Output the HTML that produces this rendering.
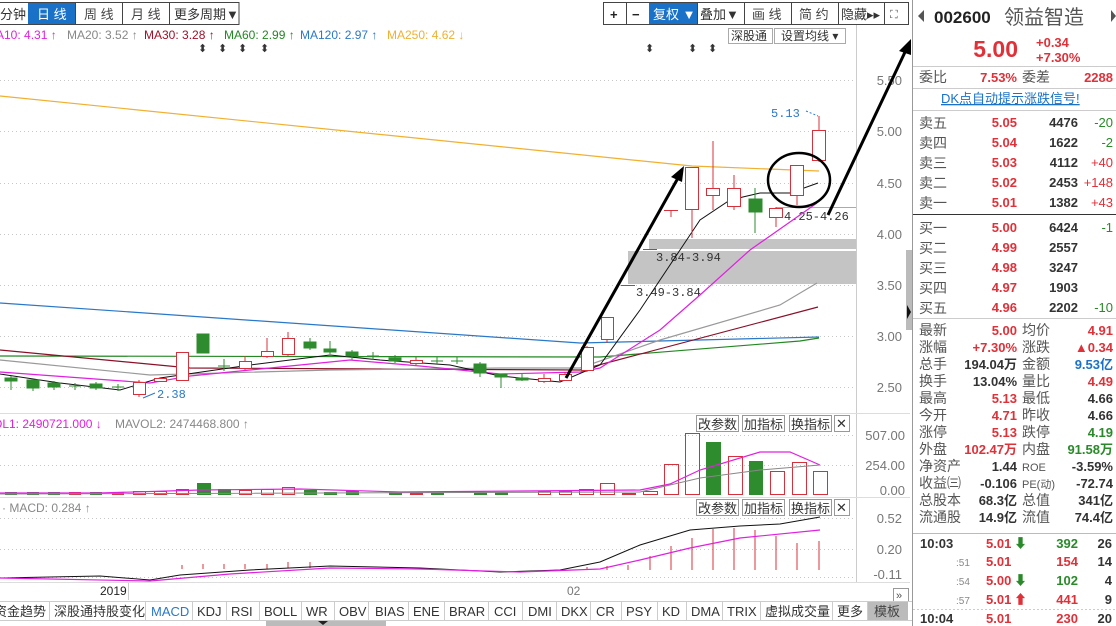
<!DOCTYPE html>
<html><head><meta charset="utf-8">
<style>
body{margin:0;background:#fff;width:1116px;height:626px;overflow:hidden;font-family:"Liberation Sans","Noto Sans CJK SC",sans-serif;}
svg{position:absolute;left:0;top:0}
</style></head><body>
<svg width="1116" height="626" viewBox="0 0 1116 626" font-family="Liberation Sans, Noto Sans CJK SC, sans-serif">
<!-- top toolbar left -->
<g font-size="13" stroke-width="1">
<rect x="-1" y="2.5" width="240" height="22" fill="#fff" stroke="#444"/>
<rect x="28" y="3" width="47" height="21" fill="#1a72c8"/>
<line x1="75.5" y1="3" x2="75.5" y2="24" stroke="#444"/>
<line x1="122.5" y1="3" x2="122.5" y2="24" stroke="#444"/>
<line x1="169.5" y1="3" x2="169.5" y2="24" stroke="#444"/>
<text x="0" y="19" fill="#333">分钟</text>
<text x="37" y="19" fill="#fff">日 线</text>
<text x="84" y="19" fill="#444">周 线</text>
<text x="131" y="19" fill="#444">月 线</text>
<text x="174" y="19" fill="#333">更多周期▼</text>
</g>
<!-- top toolbar right -->
<g font-size="13">
<rect x="603.5" y="2.5" width="305" height="22" fill="#fff" stroke="#444"/>
<rect x="649" y="3" width="48" height="21" fill="#1a72c8"/>
<line x1="626.5" y1="3" x2="626.5" y2="24" stroke="#444"/>
<line x1="697.5" y1="3" x2="697.5" y2="24" stroke="#444"/>
<line x1="744.5" y1="3" x2="744.5" y2="24" stroke="#444"/>
<line x1="791.5" y1="3" x2="791.5" y2="24" stroke="#444"/>
<line x1="838.5" y1="3" x2="838.5" y2="24" stroke="#444"/>
<line x1="884.5" y1="3" x2="884.5" y2="24" stroke="#444"/>
<text x="610" y="19" fill="#222" font-weight="bold">+</text>
<text x="632" y="19" fill="#222" font-weight="bold">−</text>
<text x="653" y="19" fill="#fff">复权 ▼</text>
<text x="700" y="19" fill="#333">叠加▼</text>
<text x="752" y="19" fill="#444">画 线</text>
<text x="799" y="19" fill="#444">简 约</text>
<text x="841" y="19" fill="#333">隐藏▸▸</text>
<text x="890" y="18" fill="#555" font-size="11">⛶</text>
</g>
<!-- MA legend -->
<g font-size="12">
<text x="-4" y="39" fill="#e020e0">A10: 4.31 ↑</text>
<text x="67" y="39" fill="#888">MA20: 3.52 ↑</text>
<text x="144" y="39" fill="#a01028">MA30: 3.28 ↑</text>
<text x="224" y="39" fill="#228822">MA60: 2.99 ↑</text>
<text x="300" y="39" fill="#2a78c8">MA120: 2.97 ↑</text>
<text x="387" y="39" fill="#f0b030">MA250: 4.62 ↓</text>
</g>
<g font-size="11" fill="#333">
<text x="198" y="52">⬍</text><text x="218" y="52">⬍</text><text x="238" y="52">⬍</text><text x="260" y="52">⬍</text>
<text x="645" y="52">⬍</text><text x="688" y="52">⬍</text><text x="708" y="52">⬍</text>
</g>
<g font-size="12">
<rect x="728.5" y="28.5" width="44" height="15" fill="#fff" stroke="#aaa"/>
<text x="731" y="40" fill="#333">深股通</text>
<rect x="774.5" y="28.5" width="71" height="15" fill="#fff" stroke="#aaa"/>
<text x="781" y="40" fill="#333">设置均线 ▾</text>
</g>
<!-- grid -->
<g stroke="#c8c8c8" stroke-dasharray="1,3">
<line x1="0" y1="80.5" x2="856" y2="80.5"/><line x1="0" y1="131.5" x2="856" y2="131.5"/>
<line x1="0" y1="183.5" x2="856" y2="183.5"/><line x1="0" y1="234.5" x2="856" y2="234.5"/>
<line x1="0" y1="285.5" x2="856" y2="285.5"/><line x1="0" y1="336.5" x2="856" y2="336.5"/>
<line x1="0" y1="387.5" x2="856" y2="387.5"/>
<line x1="0" y1="435.5" x2="856" y2="435.5"/><line x1="0" y1="465.5" x2="856" y2="465.5"/>
<line x1="0" y1="518.5" x2="856" y2="518.5"/><line x1="0" y1="549.5" x2="856" y2="549.5"/><line x1="0" y1="577.5" x2="856" y2="577.5"/>
</g>
<line x1="856.5" y1="25" x2="856.5" y2="582" stroke="#ccc"/>
<line x1="0" y1="413.5" x2="910" y2="413.5" stroke="#ddd"/>
<line x1="0" y1="497.5" x2="910" y2="497.5" stroke="#ddd"/>
<line x1="0" y1="582.5" x2="910" y2="582.5" stroke="#ddd"/>
<g font-size="13" fill="#777" text-anchor="end">
<text x="902" y="85">5.50</text><text x="902" y="136">5.00</text><text x="902" y="188">4.50</text>
<text x="902" y="239">4.00</text><text x="902" y="290">3.50</text><text x="902" y="341">3.00</text><text x="902" y="392">2.50</text>
<text x="905" y="440">507.00</text><text x="905" y="470">254.00</text><text x="905" y="495">0.00</text>
<text x="902" y="523">0.52</text><text x="902" y="554">0.20</text><text x="902" y="579">-0.11</text>
</g>
<rect x="906" y="250" width="6" height="80" fill="#bbb"/>
<path d="M907 305 L911 312 L907 319Z" fill="#111"/>
<!-- gray zones -->
<rect x="649" y="239" width="207" height="10" fill="#c4c4c4"/>
<rect x="628" y="251" width="228" height="33" fill="#c4c4c4"/>
<line x1="776" y1="207.5" x2="856" y2="207.5" stroke="#aaa"/>
<g font-family="Liberation Mono, monospace" font-size="12" fill="#333">
<text x="656" y="261">3.84-3.94</text>
<text x="636" y="296">3.49-3.84</text>
<text x="784" y="220">4.25-4.26</text>
</g>
<text x="771" y="117" font-family="Liberation Mono, monospace" font-size="12" fill="#2a78c8">5.13</text>
<path d="M806 111 L818 116" stroke="#2a78c8" stroke-dasharray="2,2"/>
<text x="157" y="398" font-family="Liberation Mono, monospace" font-size="12" fill="#2a78c8">2.38</text>
<path d="M155 393 L143 398" stroke="#2a78c8"/>
<!-- MAs -->
<g fill="none" stroke-width="1.2">
<polyline stroke="#f0b030" points="0,96 692,166 819,171"/>
<polyline stroke="#2a78c8" points="0,303 580,343 819,337"/>
<polyline stroke="#228822" points="0,356 600,357 800,341 819,338"/>
<polyline stroke="#8a1028" points="0,350 190,368 580,370 818,307"/>
<polyline stroke="#999" points="0,360 150,375 330,370 500,368 580,368 660,340 780,305 817,283"/>
<polyline stroke="#e020e0" points="0,372 150,383 190,376 350,360 420,366 500,374 580,372 600,368 660,330 700,295 750,250 817,203"/>
<polyline stroke="#111" stroke-width="1" points="0,374 60,383 120,390 160,378 250,365 330,355 380,360 450,365 500,376 560,382 600,365 640,310 680,250 700,220 730,200 760,193 790,193 818,183"/>
</g>
<!-- candles -->
<g stroke-width="1">
<g stroke="#2e8b2e" fill="#2e8b2e">
<line x1="11" y1="376" x2="11" y2="390"/><rect x="5" y="378" width="12" height="3"/>
<line x1="33" y1="379" x2="33" y2="391"/><rect x="27" y="380" width="12" height="8"/>
<line x1="54" y1="381" x2="54" y2="390"/><rect x="48" y="383" width="12" height="4"/>
<line x1="75" y1="383" x2="75" y2="390"/><line x1="69" y1="386" x2="81" y2="386"/>
<line x1="96" y1="382" x2="96" y2="390"/><rect x="90" y="384" width="12" height="4"/>
<line x1="118" y1="384" x2="118" y2="391"/><line x1="112" y1="387" x2="124" y2="387"/>
<rect x="197" y="334" width="12" height="19"/>
<line x1="224" y1="359" x2="224" y2="371"/><line x1="218" y1="366" x2="230" y2="366"/>
<line x1="310" y1="338" x2="310" y2="350"/><rect x="304" y="342" width="12" height="6"/>
<line x1="330" y1="341" x2="330" y2="354"/><rect x="324" y="349" width="12" height="3"/>
<line x1="352" y1="350" x2="352" y2="360"/><rect x="346" y="352" width="12" height="4"/>
<line x1="373" y1="352" x2="373" y2="360"/><line x1="367" y1="356" x2="379" y2="356"/>
<line x1="395" y1="355" x2="395" y2="363"/><rect x="389" y="358" width="12" height="3"/>
<line x1="437" y1="357" x2="437" y2="364"/><line x1="431" y1="361" x2="443" y2="361"/>
<line x1="457" y1="357" x2="457" y2="364"/><line x1="451" y1="361" x2="463" y2="361"/>
<line x1="480" y1="362" x2="480" y2="377"/><rect x="474" y="364" width="12" height="9"/>
<line x1="501" y1="374" x2="501" y2="388"/><rect x="495" y="374" width="12" height="3"/>
<line x1="522" y1="374" x2="522" y2="381"/><rect x="516" y="378" width="12" height="2"/>
<line x1="755" y1="188" x2="755" y2="233"/><rect x="749" y="199" width="13" height="13"/>
</g>
<g stroke="#d8303a" fill="#fff">
<line x1="139" y1="380" x2="139" y2="397"/><rect x="133.5" y="382.5" width="12" height="12"/>
<rect x="154.5" y="378.5" width="12" height="3"/>
<rect x="176.5" y="352.5" width="12" height="28"/>
<line x1="245" y1="356" x2="245" y2="370"/><rect x="239.5" y="361.5" width="12" height="7"/>
<line x1="267" y1="338" x2="267" y2="358"/><rect x="261.5" y="351.5" width="12" height="5"/>
<line x1="288" y1="332" x2="288" y2="356"/><rect x="282.5" y="338.5" width="12" height="16"/>
<line x1="416" y1="357" x2="416" y2="365"/><rect x="410.5" y="360.5" width="12" height="3"/>
<line x1="544" y1="374" x2="544" y2="383"/><rect x="538.5" y="378.5" width="12" height="3"/>
<line x1="565" y1="372" x2="565" y2="381"/><rect x="559.5" y="374.5" width="12" height="6"/>
<line x1="587" y1="346" x2="587" y2="372"/><rect x="581.5" y="347.5" width="12" height="23"/>
<line x1="607" y1="317" x2="607" y2="343"/><rect x="601.5" y="317.5" width="12" height="22"/>
<line x1="621" y1="285.5" x2="635" y2="285.5"/>
<line x1="643" y1="249.5" x2="657" y2="249.5"/>
<line x1="664" y1="210.5" x2="678" y2="210.5"/><line x1="671" y1="210" x2="671" y2="217"/>
<line x1="692" y1="209" x2="692" y2="238"/><rect x="685.5" y="167.5" width="13" height="42"/>
<line x1="713" y1="141" x2="713" y2="210"/><rect x="706.5" y="188.5" width="13" height="7"/>
<line x1="734" y1="175" x2="734" y2="210"/><rect x="727.5" y="188.5" width="13" height="18"/>
<line x1="776" y1="207" x2="776" y2="227"/><rect x="769.5" y="208.5" width="13" height="9"/>
<line x1="797" y1="195" x2="797" y2="205"/><rect x="790.5" y="165.5" width="13" height="30"/>
<line x1="819" y1="116" x2="819" y2="162"/><rect x="812.5" y="130.5" width="13" height="30"/>
</g>
</g>
<!-- drawn arrows & circle -->
<g stroke="#000" stroke-width="3" fill="none">
<line x1="566" y1="378" x2="678" y2="178"/>
<line x1="828" y1="215" x2="906" y2="50"/>
<ellipse cx="799" cy="180" rx="31" ry="27" stroke-width="2.5"/>
</g>
<path d="M684 166 L671 177 L682 182Z" fill="#000"/>
<path d="M911 39 L899 51 L911 55Z" fill="#000"/>
<!-- volume panel -->
<g font-size="12">
<text x="-7" y="428" fill="#e020e0">OL1: 2490721.000 ↓</text>
<text x="115" y="428" fill="#888">MAVOL2: 2474468.800 ↑</text>
</g>
<g font-size="13" fill="#333">
<rect x="696.5" y="415.5" width="42" height="16" fill="#fff" stroke="#999"/><text x="698" y="429">改参数</text>
<rect x="742.5" y="415.5" width="42" height="16" fill="#fff" stroke="#999"/><text x="744" y="429">加指标</text>
<rect x="789.5" y="415.5" width="42" height="16" fill="#fff" stroke="#999"/><text x="791" y="429">换指标</text>
<rect x="834.5" y="415.5" width="15" height="16" fill="#fff" stroke="#999"/><text x="836" y="428">✕</text>
<rect x="696.5" y="499.5" width="42" height="16" fill="#fff" stroke="#999"/><text x="698" y="513">改参数</text>
<rect x="742.5" y="499.5" width="42" height="16" fill="#fff" stroke="#999"/><text x="744" y="513">加指标</text>
<rect x="789.5" y="499.5" width="42" height="16" fill="#fff" stroke="#999"/><text x="791" y="513">换指标</text>
<rect x="834.5" y="499.5" width="15" height="16" fill="#fff" stroke="#999"/><text x="836" y="512">✕</text>
</g>
<g fill="#2e8b2e">
<rect x="5" y="492" width="12" height="3"/><rect x="27" y="492" width="12" height="3"/><rect x="48" y="492" width="12" height="3"/><rect x="90" y="492" width="12" height="3"/>
<rect x="197" y="483" width="14" height="12"/><rect x="218" y="489" width="13" height="6"/>
<rect x="304" y="490" width="13" height="5"/><rect x="324" y="492" width="13" height="3"/><rect x="346" y="491" width="13" height="4"/>
<rect x="389" y="492" width="13" height="3"/><rect x="431" y="492" width="13" height="3"/><rect x="474" y="492" width="13" height="3"/><rect x="495" y="492" width="13" height="3"/>
<rect x="706" y="442" width="15" height="53"/><rect x="749" y="461" width="14" height="34"/>
</g>
<g fill="#d8303a"><rect x="69" y="492" width="12" height="3"/><rect x="410" y="492" width="13" height="3"/><rect x="622" y="493" width="14" height="2"/><rect x="112" y="492" width="12" height="3"/></g>
<g fill="none" stroke="#d8303a">
<rect x="133.5" y="491.5" width="12" height="3"/><rect x="154.5" y="491.5" width="12" height="3"/><rect x="176.5" y="489.5" width="12" height="5"/>
<rect x="239.5" y="490.5" width="12" height="4"/><rect x="261.5" y="489.5" width="12" height="5"/><rect x="282.5" y="487.5" width="12" height="7"/>
<rect x="538.5" y="491.5" width="12" height="3"/><rect x="559.5" y="491.5" width="12" height="3"/>
<rect x="579.5" y="489.5" width="14" height="5"/><rect x="600.5" y="483.5" width="14" height="11"/><rect x="643.5" y="491.5" width="14" height="3"/>
<rect x="664.5" y="464.5" width="14" height="30"/><rect x="685.5" y="433.5" width="14" height="61"/>
<rect x="728.5" y="456.5" width="14" height="38"/><rect x="770.5" y="471.5" width="14" height="23"/>
<rect x="792.5" y="462.5" width="14" height="32"/><rect x="813.5" y="471.5" width="14" height="23"/>
</g>
<polyline fill="none" stroke="#e020e0" stroke-width="1.2" points="0,493 100,493 200,490 300,489 400,492 640,490 670,484 700,470 760,452 790,452 820,465"/>
<polyline fill="none" stroke="#888" points="0,494 640,492 700,478 760,470 820,465"/>
<!-- MACD -->
<text x="2" y="512" font-size="12" fill="#888">· MACD: 0.284 ↑</text>
<g stroke="#d8303a">
<line x1="628" y1="570" x2="628" y2="565"/><line x1="650" y1="570" x2="650" y2="556"/><line x1="671" y1="570" x2="671" y2="546"/>
<line x1="692" y1="570" x2="692" y2="538"/><line x1="713" y1="570" x2="713" y2="529"/><line x1="734" y1="570" x2="734" y2="528"/>
<line x1="755" y1="570" x2="755" y2="530"/><line x1="776" y1="570" x2="776" y2="536"/><line x1="797" y1="570" x2="797" y2="543"/>
<line x1="819" y1="570" x2="819" y2="541"/><line x1="607" y1="570" x2="607" y2="566"/><line x1="587" y1="570" x2="587" y2="567"/>
<line x1="182" y1="569" x2="182" y2="565"/><line x1="203" y1="569" x2="203" y2="564"/><line x1="224" y1="569" x2="224" y2="564"/><line x1="245" y1="569" x2="245" y2="564"/><line x1="267" y1="569" x2="267" y2="564"/><line x1="288" y1="568" x2="288" y2="562"/><line x1="310" y1="568" x2="310" y2="562"/>
</g>
<polyline fill="none" stroke="#111" points="0,578 100,576 150,580 180,575 250,570 330,566 420,568 500,572 560,570 600,562 640,545 690,530 740,526 780,524 820,517"/>
<polyline fill="none" stroke="#e020e0" stroke-width="1.2" points="0,578 150,581 230,574 330,568 420,569 520,572 600,569 640,560 690,548 740,538 820,530"/>
<!-- date axis -->
<text x="100" y="595" font-size="12" fill="#222">2019</text>
<line x1="128.5" y1="583" x2="128.5" y2="600" stroke="#ccc"/>
<text x="567" y="595" font-size="12" fill="#777">02</text>
<rect x="893.5" y="588.5" width="15" height="13" fill="#fff" stroke="#999"/>
<text x="896" y="599" font-size="11" fill="#555">»</text>
<!-- bottom tabs -->
<rect x="0" y="601" width="912" height="19" fill="#fff"/>
<line x1="0" y1="601.5" x2="912" y2="601.5" stroke="#ccc"/>
<line x1="0" y1="620.5" x2="912" y2="620.5" stroke="#ccc"/>
<rect x="868" y="602" width="40" height="18" fill="#bbb"/>
<g font-size="13" fill="#333">
<text x="-6" y="616">资金趋势</text><text x="54" y="616">深股通持股变化</text>
<text x="151" y="616" fill="#2a78c8">MACD</text><text x="197" y="616">KDJ</text><text x="231" y="616">RSI</text>
<text x="264" y="616">BOLL</text><text x="306" y="616">WR</text><text x="339" y="616">OBV</text><text x="375" y="616">BIAS</text>
<text x="413" y="616">ENE</text><text x="449" y="616">BRAR</text><text x="494" y="616">CCI</text><text x="528" y="616">DMI</text>
<text x="561" y="616">DKX</text><text x="596" y="616">CR</text><text x="626" y="616">PSY</text><text x="662" y="616">KD</text>
<text x="691" y="616">DMA</text><text x="727" y="616">TRIX</text><text x="765" y="616">虚拟成交量</text><text x="837" y="616">更多</text>
<text x="874" y="616" fill="#444">模板</text>
</g>
<g stroke="#ccc">
<line x1="49.5" y1="602" x2="49.5" y2="620"/><line x1="145.5" y1="602" x2="145.5" y2="620"/><line x1="192.5" y1="602" x2="192.5" y2="620"/>
<line x1="226.5" y1="602" x2="226.5" y2="620"/><line x1="259.5" y1="602" x2="259.5" y2="620"/><line x1="301.5" y1="602" x2="301.5" y2="620"/>
<line x1="334.5" y1="602" x2="334.5" y2="620"/><line x1="368.5" y1="602" x2="368.5" y2="620"/><line x1="408.5" y1="602" x2="408.5" y2="620"/>
<line x1="444.5" y1="602" x2="444.5" y2="620"/><line x1="488.5" y1="602" x2="488.5" y2="620"/><line x1="522.5" y1="602" x2="522.5" y2="620"/>
<line x1="556.5" y1="602" x2="556.5" y2="620"/><line x1="590.5" y1="602" x2="590.5" y2="620"/><line x1="621.5" y1="602" x2="621.5" y2="620"/>
<line x1="657.5" y1="602" x2="657.5" y2="620"/><line x1="686.5" y1="602" x2="686.5" y2="620"/><line x1="722.5" y1="602" x2="722.5" y2="620"/>
<line x1="760.5" y1="602" x2="760.5" y2="620"/><line x1="832.5" y1="602" x2="832.5" y2="620"/><line x1="867.5" y1="602" x2="867.5" y2="620"/>
</g>
<rect x="266" y="621" width="120" height="5" fill="#bbb"/>
<path d="M318 621 L328 621 L323 625Z" fill="#222"/>

<!-- RIGHT PANEL -->
<line x1="912.5" y1="0" x2="912.5" y2="626" stroke="#999"/>
<path d="M918 16 L924 10 L924 22Z" fill="#555"/>
<path d="M1111 10 L1116 16 L1111 22Z" fill="#555"/>
<text x="934" y="23" font-size="17" font-weight="bold" fill="#222">002600</text>
<text x="1004" y="24" font-size="20" fill="#555">领益智造</text>
<text x="1018" y="57" font-size="23" fill="#e03038" text-anchor="end" font-weight="bold">5.00</text>
<text x="1036" y="47" font-size="13" fill="#e03038" font-weight="bold">+0.34</text>
<text x="1036" y="62" font-size="13" fill="#e03038" font-weight="bold">+7.30%</text>
<line x1="913" y1="66.5" x2="1116" y2="66.5" stroke="#ccc"/>
<text x="919" y="82" font-size="14" fill="#555">委比</text>
<text x="1017" y="82" font-size="13" fill="#e03038" font-weight="bold" text-anchor="end">7.53%</text>
<text x="1022" y="82" font-size="14" fill="#555">委差</text>
<text x="1113" y="82" font-size="13" fill="#e03038" font-weight="bold" text-anchor="end">2288</text>
<line x1="913" y1="88.5" x2="1116" y2="88.5" stroke="#ccc"/>
<text x="941" y="103" font-size="13" fill="#1a72c8" text-decoration="underline">DK点自动提示涨跌信号!</text>
<line x1="913" y1="110.5" x2="1116" y2="110.5" stroke="#ccc"/>
<g font-size="14" fill="#555">
<text x="919" y="128">卖五</text><text x="919" y="148">卖四</text><text x="919" y="168">卖三</text><text x="919" y="188">卖二</text><text x="919" y="208">卖一</text>
<text x="919" y="233">买一</text><text x="919" y="253">买二</text><text x="919" y="273">买三</text><text x="919" y="293">买四</text><text x="919" y="313">买五</text>
</g>
<g font-size="13" font-weight="bold" fill="#e03038" text-anchor="end">
<text x="1017" y="127">5.05</text><text x="1017" y="147">5.04</text><text x="1017" y="167">5.03</text><text x="1017" y="187">5.02</text><text x="1017" y="207">5.01</text>
<text x="1017" y="232">5.00</text><text x="1017" y="252">4.99</text><text x="1017" y="272">4.98</text><text x="1017" y="292">4.97</text><text x="1017" y="312">4.96</text>
</g>
<g font-size="13" font-weight="bold" fill="#333" text-anchor="end">
<text x="1078" y="127">4476</text><text x="1078" y="147">1622</text><text x="1078" y="167">4112</text><text x="1078" y="187">2453</text><text x="1078" y="207">1382</text>
<text x="1078" y="232">6424</text><text x="1078" y="252">2557</text><text x="1078" y="272">3247</text><text x="1078" y="292">1903</text><text x="1078" y="312">2202</text>
</g>
<g font-size="13" text-anchor="end">
<text x="1113" y="127" fill="#2a8a2a">-20</text><text x="1113" y="147" fill="#2a8a2a">-2</text><text x="1113" y="167" fill="#e03038">+40</text>
<text x="1113" y="187" fill="#e03038">+148</text><text x="1113" y="207" fill="#e03038">+43</text><text x="1113" y="232" fill="#2a8a2a">-1</text>
<text x="1113" y="312" fill="#2a8a2a">-10</text>
</g>
<line x1="913" y1="214.5" x2="1116" y2="214.5" stroke="#333"/>
<line x1="913" y1="318.5" x2="1116" y2="318.5" stroke="#ccc"/>
<g font-size="14" fill="#555">
<text x="919" y="335">最新</text><text x="919" y="352">涨幅</text><text x="919" y="369">总手</text><text x="919" y="386">换手</text>
<text x="919" y="403">最高</text><text x="919" y="420">今开</text><text x="919" y="437">涨停</text><text x="919" y="454">外盘</text>
<text x="919" y="471">净资产</text><text x="919" y="488">收益㈢</text><text x="919" y="505">总股本</text><text x="919" y="522">流通股</text>
<text x="1022" y="335">均价</text><text x="1022" y="352">涨跌</text><text x="1022" y="369">金额</text><text x="1022" y="386">量比</text>
<text x="1022" y="403">最低</text><text x="1022" y="420">昨收</text><text x="1022" y="437">跌停</text><text x="1022" y="454">内盘</text>
<text x="1022" y="471" font-size="11">ROE</text><text x="1022" y="488" font-size="11">PE(动)</text><text x="1022" y="505">总值</text><text x="1022" y="522">流值</text>
</g>
<g font-size="13" font-weight="bold" text-anchor="end">
<text x="1017" y="335" fill="#e03038">5.00</text><text x="1017" y="352" fill="#e03038">+7.30%</text><text x="1017" y="369" fill="#333">194.04万</text>
<text x="1017" y="386" fill="#333">13.04%</text><text x="1017" y="403" fill="#e03038">5.13</text><text x="1017" y="420" fill="#e03038">4.71</text>
<text x="1017" y="437" fill="#e03038">5.13</text><text x="1017" y="454" fill="#e03038">102.47万</text><text x="1017" y="471" fill="#333">1.44</text>
<text x="1017" y="488" fill="#333">-0.106</text><text x="1017" y="505" fill="#333">68.3亿</text><text x="1017" y="522" fill="#333">14.9亿</text>
<text x="1113" y="335" fill="#e03038">4.91</text><text x="1113" y="352" fill="#e03038">▲0.34</text><text x="1113" y="369" fill="#1a72c8">9.53亿</text>
<text x="1113" y="386" fill="#e03038">4.49</text><text x="1113" y="403" fill="#333">4.66</text><text x="1113" y="420" fill="#333">4.66</text>
<text x="1113" y="437" fill="#2a8a2a">4.19</text><text x="1113" y="454" fill="#2a8a2a">91.58万</text><text x="1113" y="471" fill="#333">-3.59%</text>
<text x="1113" y="488" fill="#333">-72.74</text><text x="1113" y="505" fill="#333">341亿</text><text x="1113" y="522" fill="#333">74.4亿</text>
</g>
<line x1="913" y1="533.5" x2="1116" y2="533.5" stroke="#bbb"/>
<g font-size="13" font-weight="bold">
<text x="920" y="548" fill="#333">10:03</text><text x="956" y="566" fill="#888" font-size="10" font-weight="normal">:51</text>
<text x="956" y="585" fill="#888" font-size="10" font-weight="normal">:54</text><text x="956" y="604" fill="#888" font-size="10" font-weight="normal">:57</text>
<text x="920" y="623" fill="#333">10:04</text>
<text x="986" y="548" fill="#e03038">5.01</text><text x="986" y="566" fill="#e03038">5.01</text><text x="986" y="585" fill="#e03038">5.00</text>
<text x="986" y="604" fill="#e03038">5.01</text><text x="986" y="623" fill="#e03038">5.01</text>
<text x="1014" y="548" fill="#2a8a2a">⬇</text><text x="1014" y="585" fill="#2a8a2a">⬇</text><text x="1014" y="604" fill="#e03038">⬆</text>
</g>
<g font-size="13" font-weight="bold" text-anchor="end">
<text x="1078" y="548" fill="#2a8a2a">392</text><text x="1078" y="566" fill="#e03038">154</text><text x="1078" y="585" fill="#2a8a2a">102</text>
<text x="1078" y="604" fill="#e03038">441</text><text x="1078" y="623" fill="#e03038">230</text>
<text x="1112" y="548" fill="#333">26</text><text x="1112" y="566" fill="#333">14</text><text x="1112" y="585" fill="#333">4</text>
<text x="1112" y="604" fill="#333">9</text><text x="1112" y="623" fill="#333">20</text>
</g>
<line x1="913" y1="609.5" x2="1116" y2="609.5" stroke="#ccc" stroke-dasharray="2,2"/>
</svg>
</body></html>
